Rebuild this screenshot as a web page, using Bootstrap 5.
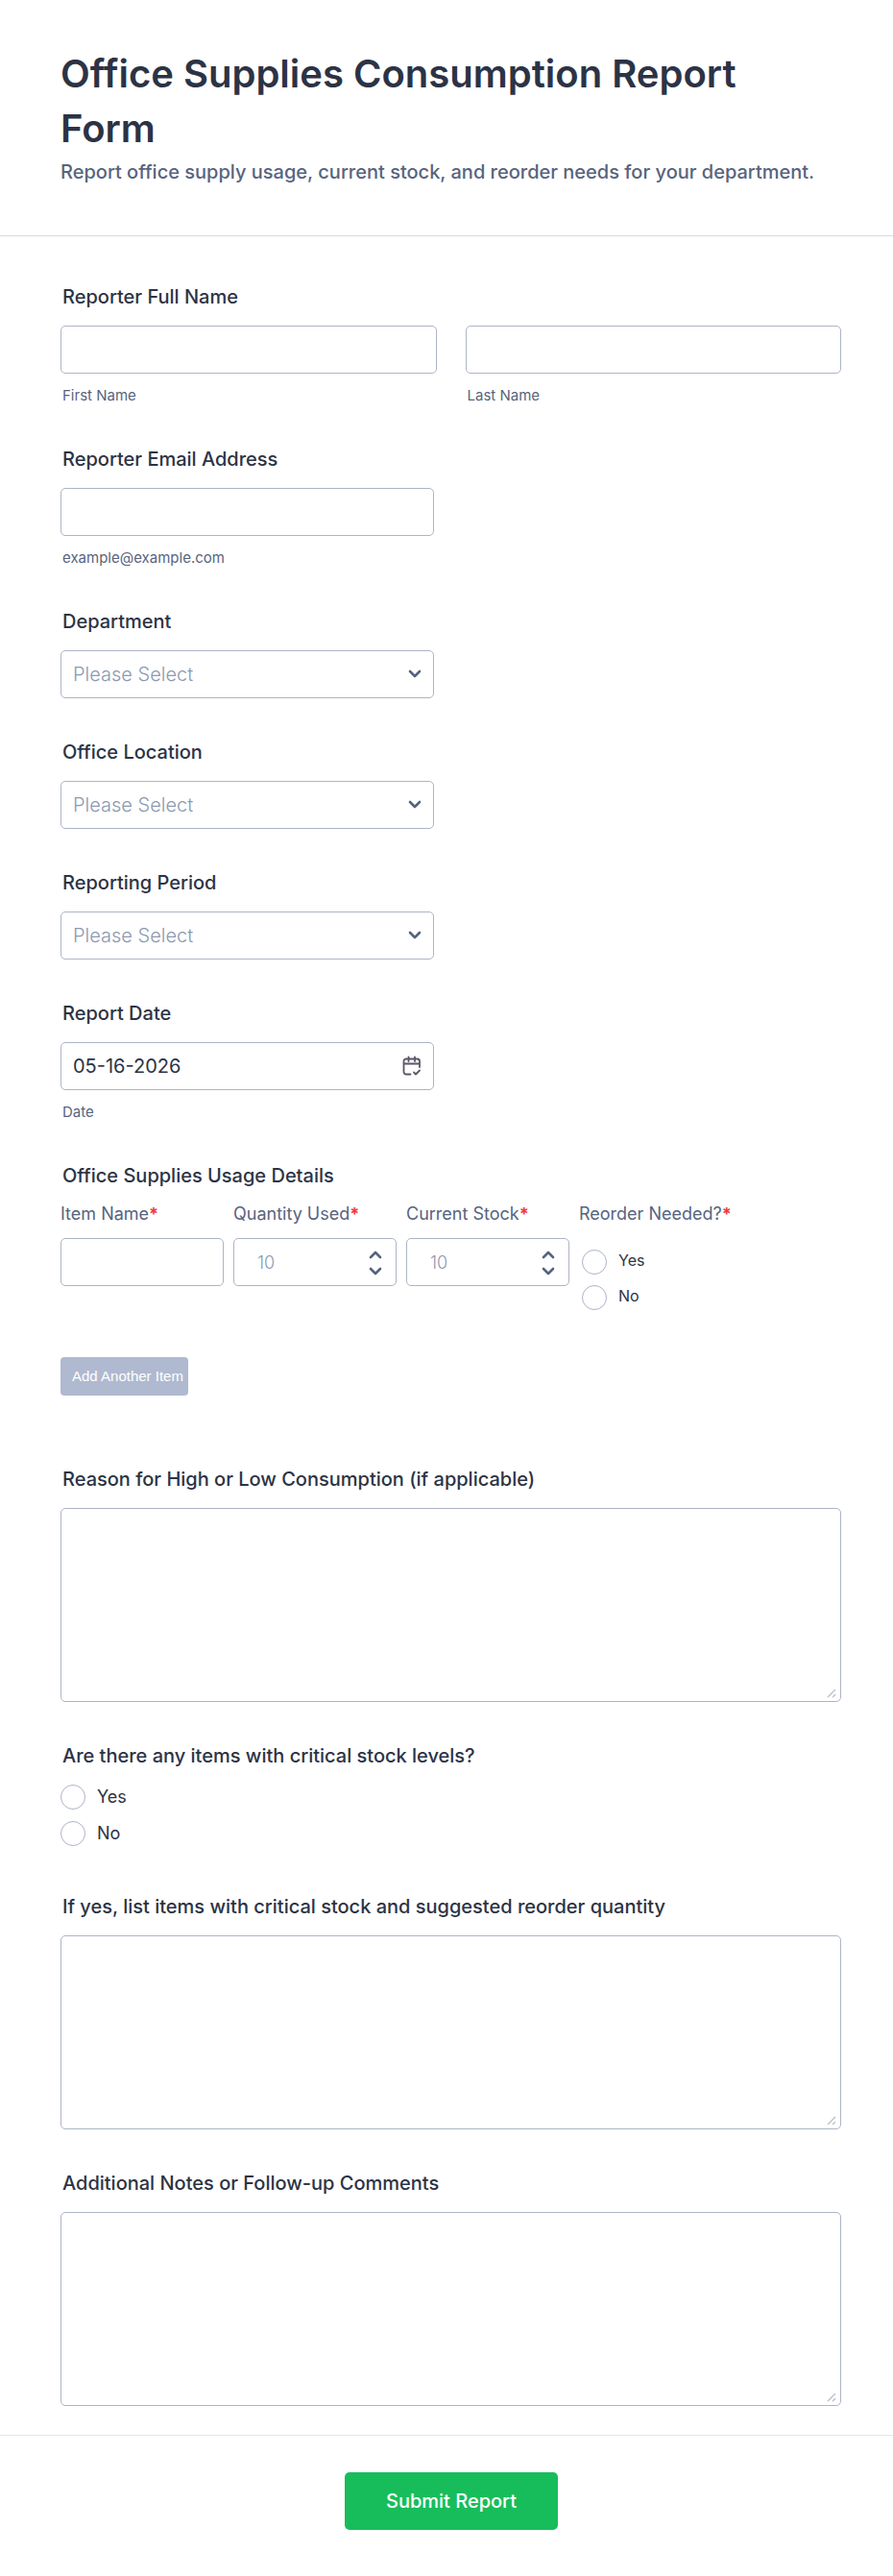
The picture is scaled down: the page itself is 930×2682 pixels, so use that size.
<!DOCTYPE html>
<html lang="en">
<head>
<meta charset="utf-8">
<meta name="viewport" content="width=device-width, initial-scale=1">
<title>Office Supplies Consumption Report Form</title>
<link href="https://cdn.jsdelivr.net/npm/bootstrap@5.3.0/dist/css/bootstrap.min.css" rel="stylesheet">
<style>
  :root { --ink: #2c3345; --muted: #57647e; --line: #adb4c6; --hint: #8d99b0; }
  body { font-family: Inter, "Liberation Sans", sans-serif; color: var(--ink); background: #fff; line-height: 20px; }
  .form-head { padding: 48px 80px 51px 63px; border-bottom: 1px solid #d7dbe5; }
  .form-head h1 { margin-bottom: 2px; font-size: 40px; font-weight: 600; line-height: 57px; color: var(--ink); }
  .form-head p { font-size: 20px; font-weight: 500; line-height: 30px; color: var(--muted); }
  .form-main { padding: 53px 54px 30px 63px; gap: 46px; }
  .q-label { display: block; padding-left: 2px; margin-bottom: 20px; font-size: 20px; font-weight: 500; line-height: 20px; float: none; }
  .half { width: 389px; max-width: 100%; }
  .form-control, .form-select { height: 50px; border: 1px solid var(--line); border-radius: 5px; padding: 8px 12px; font-size: 20px; color: var(--ink); }
  .form-select { color: var(--hint); font-weight: 300; background: #fff url("data:image/svg+xml,%3Csvg xmlns='http://www.w3.org/2000/svg' viewBox='0 0 14 10'%3E%3Cpath d='M2 2l5 5 5-5' fill='none' stroke='%2355637f' stroke-width='2.6' stroke-linecap='round' stroke-linejoin='round'/%3E%3C/svg%3E") no-repeat right 12px center / 14px 10px; }
  textarea.form-control { height: 202px; }
  textarea::-webkit-resizer { background: url("data:image/svg+xml,%3Csvg xmlns='http://www.w3.org/2000/svg' viewBox='0 0 15 15'%3E%3Cpath d='M2 11l8-8M7 11l3-3' fill='none' stroke='%23b9bfcf' stroke-width='1.4'/%3E%3C/svg%3E") no-repeat center / 15px 15px; }
  .sub-label { display: block; margin-top: 13px; padding-left: 2px; font-size: 15px; line-height: 20px; color: var(--muted); }
  .names { gap: 30px; }
  .date-icon { right: 12px; top: 14px; width: 22px; height: 22px; border: 0; padding: 0; background: none; display: flex; }
  .items { gap: 10px; }
  .item-col { width: 170px; }
  .item-label { display: block; margin-bottom: 15px; font-size: 18px; font-weight: 400; line-height: 20px; color: var(--muted); white-space: nowrap; }
  .req { color: #f23a3c; font-weight: 700; }
  .num { font-size: 18px; font-weight: 300; padding-left: 24px; appearance: textfield; }
  .num::placeholder { color: var(--hint); opacity: 1; }
  .num::-webkit-inner-spin-button { display: none; }
  .steps { right: 15px; top: 13px; gap: 6px; }
  .steps button { border: 0; padding: 0; background: none; width: 14px; height: 10px; display: flex; }
  .pick { gap: 12px; font-size: 18px; line-height: 26px; }
  .pick .form-check-input { width: 26px; height: 26px; margin: 0; border: 1px solid var(--line); }
  .picks { gap: 12px; padding-bottom: 7px; }
  .item-picks { padding: 27px 0 0 3px; gap: 11px; }
  .item-picks .pick { font-size: 16px; line-height: 22px; }
  .btn-add { margin: 49px 0 31px; padding: 0 5px 0 12px; height: 40px; font-family: "Liberation Sans", sans-serif; font-size: 15px; line-height: 40px; border: 0; border-radius: 4px; color: #fff; background: #afb9cf; }
  .form-foot { border-top: 1px solid #e3e5ec; padding: 38px 53px 48px 63px; }
  .btn-send { height: 60px; padding: 0 43px; font-size: 20px; font-weight: 500; border: 0; border-radius: 5px; color: #fff; background: #18bd5b; }
</style>
</head>
<body>
<form>
  <header class="form-head">
    <h1>Office Supplies Consumption Report Form</h1>
    <p class="mb-0">Report office supply usage, current stock, and reorder needs for your department.</p>
  </header>
  <main class="form-main d-flex flex-column">
    <fieldset>
      <legend class="q-label">Reporter Full Name</legend>
      <div class="names d-flex">
        <div class="flex-fill"><input class="form-control" id="first" type="text"><label class="sub-label" for="first">First Name</label></div>
        <div class="flex-fill"><input class="form-control" id="last" type="text"><label class="sub-label" for="last">Last Name</label></div>
      </div>
    </fieldset>
    <div>
      <label class="q-label" for="email">Reporter Email Address</label>
      <input class="form-control half" id="email" type="email" aria-describedby="email-hint">
      <span class="sub-label" id="email-hint">example@example.com</span>
    </div>
    <div>
      <label class="q-label" for="dept">Department</label>
      <select class="form-select half" id="dept"><option>Please Select</option></select>
    </div>
    <div>
      <label class="q-label" for="office">Office Location</label>
      <select class="form-select half" id="office"><option>Please Select</option></select>
    </div>
    <div>
      <label class="q-label" for="period">Reporting Period</label>
      <select class="form-select half" id="period"><option>Please Select</option></select>
    </div>
    <div>
      <label class="q-label" for="date">Report Date</label>
      <div class="half position-relative">
        <input class="form-control" id="date" type="text" value="05-16-2026" aria-describedby="date-hint">
        <button class="date-icon position-absolute" type="button" aria-label="Choose date">
          <svg width="22" height="22" viewBox="0 0 22 22" fill="none" stroke="#5b5567" stroke-width="1.8" stroke-linecap="round" stroke-linejoin="round"><path d="M9.5 19.5H5A2.5 2.5 0 0 1 2.5 17V6A2.5 2.5 0 0 1 5 3.500H16.500A2.500 2.500 0 0 1 19 6V12M2.500 8.500H19M7.500 1.500V6M14 1.500V6M13 17.500l2 2 4-4"/></svg>
        </button>
      </div>
      <span class="sub-label" id="date-hint">Date</span>
    </div>
    <fieldset>
      <legend class="q-label">Office Supplies Usage Details</legend>
      <div class="items d-flex">
        <div class="item-col"><label class="item-label" for="item">Item Name<span class="req">*</span></label><input class="form-control" id="item" type="text"></div>
        <div class="item-col">
          <label class="item-label" for="qty">Quantity Used<span class="req">*</span></label>
          <div class="position-relative">
            <input class="form-control num" id="qty" type="number" placeholder="10">
            <div class="steps position-absolute d-flex flex-column">
              <button type="button" aria-label="Increase"><svg width="14" height="10" viewBox="0 0 14 10" fill="none" stroke="#55637f" stroke-width="2.6" stroke-linecap="round" stroke-linejoin="round"><path d="M2 7l5-5 5 5"/></svg></button>
              <button type="button" aria-label="Decrease"><svg width="14" height="10" viewBox="0 0 14 10" fill="none" stroke="#55637f" stroke-width="2.6" stroke-linecap="round" stroke-linejoin="round"><path d="M2 3l5 5 5-5"/></svg></button>
            </div>
          </div>
        </div>
        <div class="item-col">
          <label class="item-label" for="stock">Current Stock<span class="req">*</span></label>
          <div class="position-relative">
            <input class="form-control num" id="stock" type="number" placeholder="10">
            <div class="steps position-absolute d-flex flex-column">
              <button type="button" aria-label="Increase"><svg width="14" height="10" viewBox="0 0 14 10" fill="none" stroke="#55637f" stroke-width="2.6" stroke-linecap="round" stroke-linejoin="round"><path d="M2 7l5-5 5 5"/></svg></button>
              <button type="button" aria-label="Decrease"><svg width="14" height="10" viewBox="0 0 14 10" fill="none" stroke="#55637f" stroke-width="2.6" stroke-linecap="round" stroke-linejoin="round"><path d="M2 3l5 5 5-5"/></svg></button>
            </div>
          </div>
        </div>
        <div class="item-col" role="radiogroup" aria-labelledby="reorder">
          <span class="item-label mb-0" id="reorder">Reorder Needed?<span class="req">*</span></span>
          <div class="item-picks d-flex flex-column">
            <label class="pick d-flex"><input class="form-check-input" type="radio" name="reorder">Yes</label>
            <label class="pick d-flex"><input class="form-check-input" type="radio" name="reorder">No</label>
          </div>
        </div>
      </div>
      <button class="btn-add" type="button">Add Another Item</button>
    </fieldset>
    <div>
      <label class="q-label" for="reason">Reason for High or Low Consumption (if applicable)</label>
      <textarea class="form-control" id="reason"></textarea>
    </div>
    <fieldset>
      <legend class="q-label">Are there any items with critical stock levels?</legend>
      <div class="picks d-flex flex-column">
        <label class="pick d-flex"><input class="form-check-input" type="radio" name="critical">Yes</label>
        <label class="pick d-flex"><input class="form-check-input" type="radio" name="critical">No</label>
      </div>
    </fieldset>
    <div>
      <label class="q-label" for="list">If yes, list items with critical stock and suggested reorder quantity</label>
      <textarea class="form-control" id="list"></textarea>
    </div>
    <div>
      <label class="q-label" for="notes">Additional Notes or Follow-up Comments</label>
      <textarea class="form-control" id="notes"></textarea>
    </div>
  </main>
  <footer class="form-foot text-center">
    <button class="btn-send" type="submit">Submit Report</button>
  </footer>
</form>
<script src="https://cdn.jsdelivr.net/npm/bootstrap@5.3.0/dist/js/bootstrap.bundle.min.js"></script>
</body>
</html>
